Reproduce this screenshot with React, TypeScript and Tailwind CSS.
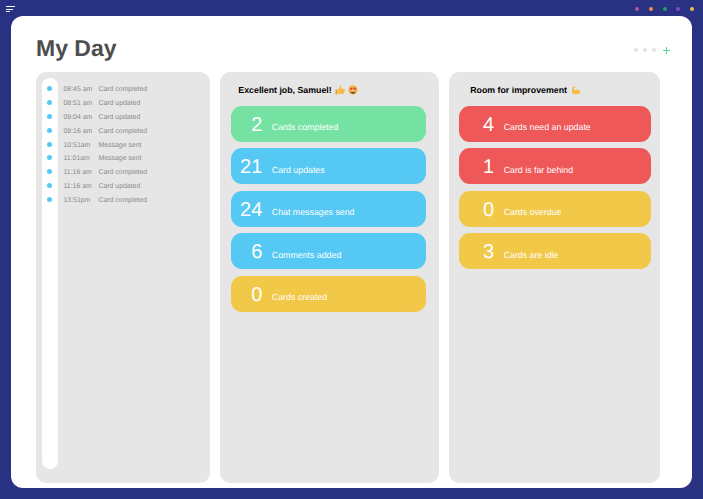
import React from 'react';

const topDots = ['bg-[#b0569f]', 'bg-[#ee8f3a]', 'bg-[#1f9d63]', 'bg-[#8247d0]', 'bg-[#f0c040]'];

const timeline = [
  { time: '08:45 am', label: 'Card completed' },
  { time: '08:51 am', label: 'Card updated' },
  { time: '09:04 am', label: 'Card updated' },
  { time: '09:16 am', label: 'Card completed' },
  { time: '10:51am', label: 'Message sent' },
  { time: '11:01am', label: 'Message sent' },
  { time: '11:16 am', label: 'Card completed' },
  { time: '11:16 am', label: 'Card updated' },
  { time: '13:51pm', label: 'Card completed' },
];

const GREEN = 'bg-[#75e2a3]';
const BLUE = 'bg-[#55c9f3]';
const YELLOW = 'bg-[#f2c849]';
const RED = 'bg-[#ee5858]';

const good = [
  { n: 2, label: 'Cards completed', color: GREEN },
  { n: 21, label: 'Card updates', color: BLUE },
  { n: 24, label: 'Chat messages send', color: BLUE },
  { n: 6, label: 'Comments added', color: BLUE },
  { n: 0, label: 'Cards created', color: YELLOW },
];

const bad = [
  { n: 4, label: 'Cards need an update', color: RED },
  { n: 1, label: 'Card is far behind', color: RED },
  { n: 0, label: 'Cards overdue', color: YELLOW },
  { n: 3, label: 'Cards are idle', color: YELLOW },
];

function ThumbsUp() {
  return (
    <svg width="10" height="10" viewBox="0 0 11 11">
      <path d="M0.5 5h2.2v5.500H0.500z" fill="#e0a030" />
      <path d="M3.200 5.200 5.400 2.600V0.600c1.200-.2 1.800.8 1.500 2L6.600 4h3.200c.9 0 1.100 1 .7 1.500.4.500.3 1.200-.2 1.500.2.600 0 1.200-.5 1.400.1.800-.3 1.600-1.200 1.600H5.200c-.8 0-1.400-.3-2-.5z" fill="#f5bd45" />
    </svg>
  );
}

function HeartEyes() {
  return (
    <svg width="10" height="10" viewBox="0 0 11 11">
      <circle cx="5.500" cy="5.500" r="5.200" fill="#f5b945" />
      <path d="M2 3.200c.6-.9 1.500-.6 1.700 0 .3-.6 1.300-.8 1.600.1.2.8-1 1.700-1.800 2.200C2.800 5 1.700 4.100 2 3.200zM5.700 3.300c.3-.9 1.300-.7 1.600-.1.2-.6 1.100-.9 1.700 0 .3.900-.8 1.800-1.500 2.300-.8-.5-2-1.400-1.800-2.200z" fill="#e8404a" />
      <path d="M2.500 6.600c1.800.6 4.200.6 6 0-.2 1.700-1.400 3-3 3s-2.800-1.300-3-3z" fill="#7a3b1e" />
      <path d="M3 6.900c1.600.4 3.400.4 5 0l-.2.7c-1.500.3-3.100.3-4.600 0z" fill="#fff" />
    </svg>
  );
}

function Muscle() {
  return (
    <svg width="10" height="9" viewBox="0 0 12 11">
      <path d="M1.600 1.400C2.600.5 4.200.4 5 .9c.4.500.1 1.200-.5 1.300l-1 .2c-.1 1 0 2 .4 3 .9-1 2.600-1.500 4.200-1.100 1.600.4 3 1.600 3.200 3 .2 1.500-1 2.400-2.700 2.600-2.300.2-5 .2-6.800-.3C.8 7.500.6 3.600 1.600 1.400z" fill="#f5bd45" />
    </svg>
  );
}

function StatCard({ n, label, color, numWidth }: { n: number; label: string; color: string; numWidth: string }) {
  return (
    <div className={`${color} h-9 rounded-[11px] flex items-center text-white`}>
      <span className={`${numWidth} pt-[2px] text-right text-[20px] leading-none shrink-0`}>{n}</span>
      <span className="ml-[9.500px] pt-[8px] text-[8.800px] leading-none whitespace-nowrap">{label}</span>
    </div>
  );
}

export default function App() {
  return (
    <div className="w-[703px] h-[499px] overflow-hidden bg-[#293282] flex flex-col font-['Liberation_Sans',Arial,sans-serif] [text-rendering:geometricPrecision]">
      {/* top bar */}
      <div className="h-4 shrink-0 flex items-start justify-between pl-[6px] pr-[9px]">
        <div className="flex flex-col gap-[1.500px] mt-[6px]">
          <div className="h-[1px] w-[9px] bg-white" />
          <div className="h-[1px] w-[7px] bg-white" />
          <div className="h-[1px] w-[4px] bg-white" />
        </div>
        <div className="flex gap-[9.700px] mt-[7px]">
          {topDots.map((c) => (
            <div key={c} className={`${c} w-1 h-1 rounded-full`} />
          ))}
        </div>
      </div>

      {/* main sheet */}
      <div className="ml-[11px] w-[681px] h-[472px] bg-white rounded-[12px] pl-[25px] pr-[32px] pb-[5px] flex flex-col">
        <div className="h-[55.500px] shrink-0 flex items-start justify-between">
          <h1 className="mt-[20.500px] text-[23px] leading-none font-bold text-[#4d4d4d]">My Day</h1>
          <div className="mt-[30.500px] -mr-[10px] flex items-center gap-[4.800px]">
            <div className="w-1 h-1 rounded-full bg-[#e2e2e2]" />
            <div className="w-1 h-1 rounded-full bg-[#e2e2e2]" />
            <div className="w-1 h-1 rounded-full bg-[#e2e2e2]" />
            <svg width="7" height="7" viewBox="0 0 7 7" className="ml-[2.500px]">
              <path d="M3.500 0v7M0 3.500h7" stroke="#62d896" strokeWidth="1" />
            </svg>
          </div>
        </div>

        <div className="flex-1 min-h-0 flex gap-[10px]">
          {/* timeline */}
          <div className="w-[174.500px] bg-[#e6e6e6] rounded-[10px] pl-[5.500px] pt-[6.500px] pb-[14px] flex">
            <div className="w-4 h-full bg-white rounded-full shrink-0 pt-[4px]">
              {timeline.map((t, i) => (
                <div key={i} className="h-[13.800px] flex items-center justify-center">
                  <div className="w-[5px] h-[5px] rounded-full bg-[#55c9f3]" />
                </div>
              ))}
            </div>
            <div className="ml-[6px] pt-[6px] text-[6.900px] leading-none text-[#8a8a8a]">
              {timeline.map((t, i) => (
                <div key={i} className="h-[13.800px] flex items-center whitespace-nowrap">
                  <span className="w-[35px]">{t.time}</span>
                  <span>{t.label}</span>
                </div>
              ))}
            </div>
          </div>

          {/* good */}
          <div className="w-[219px] bg-[#e6e6e6] rounded-[10px] pl-[11px] pr-[13px] flex flex-col">
            <div className="h-[34.200px] shrink-0 pl-[7px] pt-[3px] flex items-center gap-[3px] text-[8.800px] font-bold text-black">
              <span>Excellent job, Samuel!</span>
              <ThumbsUp />
              <HeartEyes />
            </div>
            <div className="flex flex-col gap-[6.500px]">
              {good.map((c) => (
                <StatCard key={c.label} {...c} numWidth="w-[31px]" />
              ))}
            </div>
          </div>

          {/* room for improvement */}
          <div className="w-[211px] bg-[#e6e6e6] rounded-[10px] pl-[10px] pr-[9px] flex flex-col">
            <div className="h-[34.200px] shrink-0 pl-[11px] pt-[3px] flex items-center gap-[4px] text-[8.800px] font-bold text-black">
              <span>Room for improvement</span>
              <Muscle />
            </div>
            <div className="flex flex-col gap-[6.500px]">
              {bad.map((c) => (
                <StatCard key={c.label} {...c} numWidth="w-[35px]" />
              ))}
            </div>
          </div>
        </div>
      </div>
    </div>
  );
}
